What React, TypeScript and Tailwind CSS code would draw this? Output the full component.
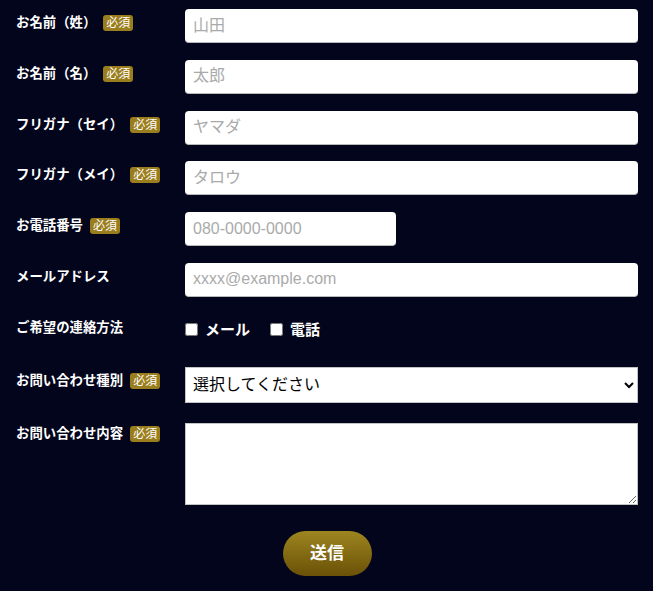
import React from 'react';

const Badge = () => (
  <span className="ml-[7px] inline-flex h-[16px] items-center rounded-[3px] bg-[#9a7d1c] px-[3px] text-[12px] leading-none font-normal text-white">
    必須
  </span>
);

function Label({ text, required = false, pt = 'pt-[4px]' }: { text: string; required?: boolean; pt?: string }) {
  return (
    <div className={`${pt} flex h-[20px] items-center text-[13.4px] font-bold text-white box-content`}>
      <span>{text}</span>
      {required && <Badge />}
    </div>
  );
}

const inputCls =
  'h-[34px] w-full rounded-[4px] border-b border-[#b9b9b9] bg-white px-[8px] text-[16px] text-black placeholder:text-[#aaaaaa] outline-none';

export default function App() {
  const textRows = [
    { label: 'お名前（姓）', placeholder: '山田' },
    { label: 'お名前（名）', placeholder: '太郎' },
    { label: 'フリガナ（セイ）', placeholder: 'ヤマダ' },
    { label: 'フリガナ（メイ）', placeholder: 'タロウ' },
  ];

  return (
    <div
      className="min-h-[591px] w-full bg-[#02051c] pl-[16px] pr-[15px] pt-[9px]"
      style={{ fontFamily: '"Liberation Sans", "Noto Sans CJK JP", sans-serif' }}
    >
      <form className="grid grid-cols-[169px_1fr]">
        {textRows.map((row) => (
          <React.Fragment key={row.label}>
            <Label text={row.label} required />
            <div className="mb-[16.8px]">
              <input type="text" placeholder={row.placeholder} className={inputCls} />
            </div>
          </React.Fragment>
        ))}

        <Label text="お電話番号" required />
        <div className="mb-[16.8px]">
          <input type="tel" placeholder="080-0000-0000" className={`${inputCls} !w-[211px]`} />
        </div>

        <Label text="メールアドレス" />
        <div className="mb-[17px]">
          <input type="email" placeholder="xxxx@example.com" className={inputCls} />
        </div>

        <Label text="ご希望の連絡方法" />
        <div className="mb-[17px] flex h-[36px] items-start gap-[20px] pt-[5px]">
          <label className="flex h-[22px] items-center gap-[7px] text-[15px] font-bold text-white">
            <input type="checkbox" className="m-0 h-[13px] w-[13px]" />
            メール
          </label>
          <label className="flex h-[22px] items-center gap-[7px] text-[15px] font-bold text-white">
            <input type="checkbox" className="m-0 h-[13px] w-[13px]" />
            電話
          </label>
        </div>

        <Label text="お問い合わせ種別" required />
        <div className="mb-[20px]">
          <select className="h-[36px] w-full border border-[#c4c4c4] bg-white pl-[3px] text-[16px] text-black outline-none">
            <option>選択してください</option>
            <option>サービスについて</option>
            <option>その他</option>
          </select>
        </div>

        <Label text="お問い合わせ内容" required pt="pt-[1px]" />
        <div>
          <textarea className="block h-[82px] w-full border border-[#c4c4c4] bg-white text-[16px] text-black outline-none" />
        </div>
      </form>

      <div className="flex justify-center pt-[26px]">
        <button
          type="submit"
          className="h-[45px] w-[89px] rounded-full bg-gradient-to-b from-[#9d8620] to-[#6a5107] text-[17px] font-bold text-white"
        >
          送信
        </button>
      </div>
    </div>
  );
}
